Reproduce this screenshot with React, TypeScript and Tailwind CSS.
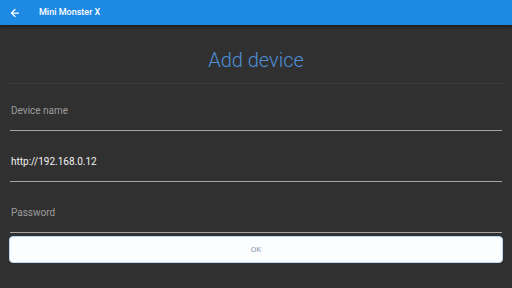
import { ArrowLeft } from 'lucide-react'

function Field({ text, value, top, gap }: { text: string; value?: boolean; top: string; gap: string }) {
    return (
        <div className={`${top} px-[10px]`}>
            <div className={`h-[14px] leading-[14px] text-[10px] pl-px ${value ? 'text-[#f2f2f2]' : 'text-[#9c9c9c]'}`}>
                {text}
            </div>
            <div className={`${gap} h-px bg-[#a5a5a5]`} />
        </div>
    )
}

export default function App() {
    return (
        <div className="w-[512px] h-[288px] bg-[#303030] flex flex-col overflow-hidden font-['Roboto',sans-serif]">
            {/* App bar */}
            <div className="h-[25px] bg-[#1e88e5] flex items-center shadow-[0_2px_2px_rgba(0,0,0,0.35)] relative z-10">
                <ArrowLeft className="ml-[9px] w-[12px] h-[12px] text-white" strokeWidth={2.5} />
                <span className="ml-[18px] text-[9px] font-medium text-white">Mini Monster X</span>
            </div>

            {/* Title */}
            <div className="h-[58px] flex items-center justify-center pt-[12px]">
                <h1 className="text-[20px] leading-[24px] font-light text-[#4d8fd6]">Add device</h1>
            </div>
            <div className="mx-[8px] h-px bg-[#3c3c3c]" />

            {/* Form */}
            <Field text="Device name" top="pt-[20px]" gap="mt-[12px]" />
            <Field text="http://192.168.0.12" value top="pt-[24px]" gap="mt-[12px]" />
            <Field text="Password" top="pt-[24px]" gap="mt-[12px]" />

            <div className="px-[9px] mt-[3px]">
                <button className="w-full h-[27px] rounded-[4px] bg-[#fbfdff] border border-[#b9d9f7] flex items-center justify-center text-[8px] text-[#8796a8]">
                    OK
                </button>
            </div>
        </div>
    )
}
